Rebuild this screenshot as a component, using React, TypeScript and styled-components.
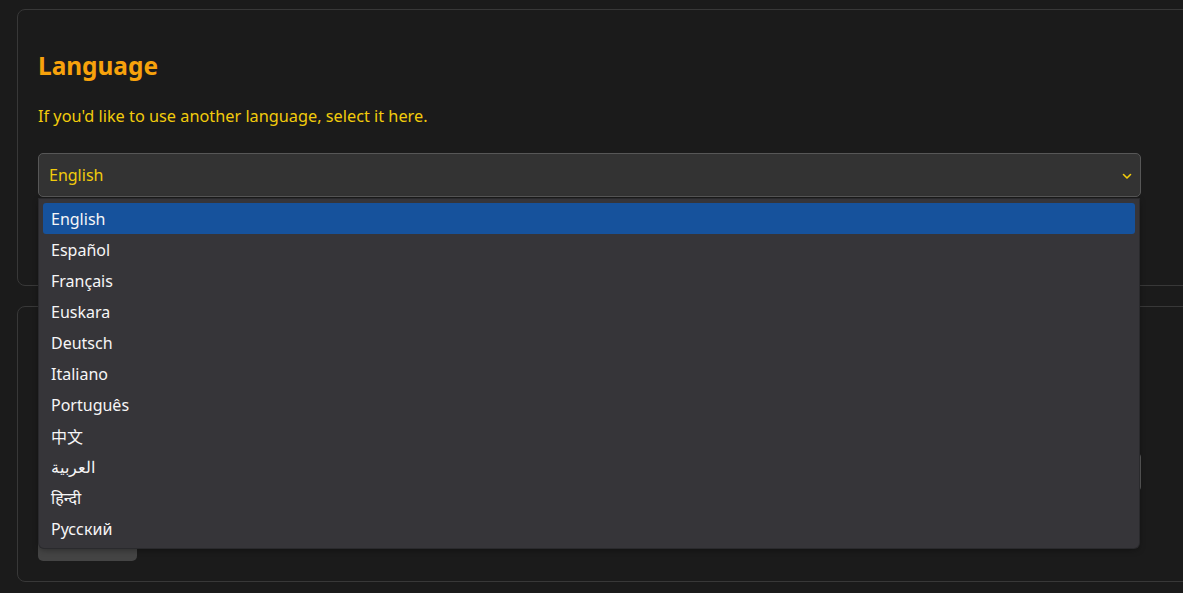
import React from "react";
import styled, { createGlobalStyle } from "styled-components";

const GlobalStyle = createGlobalStyle`
  html, body {
    margin: 0;
    padding: 0;
    background: #1b1b1b;
    overflow: hidden;
  }
  body {
    font-family: "Noto Sans", "Noto Sans CJK SC", sans-serif;
  }
`;

const Page = styled.div`
  display: flex;
  flex-direction: column;
  gap: 20px;
  padding: 9px 0 0 17px;
  width: 1200px;
`;

const Card = styled.section`
  position: relative;
  border: 1px solid #383838;
  border-radius: 8px;
  background: #1b1b1b;
  padding: 0 20px 20px 20px;
  display: flex;
  flex-direction: column;
`;

const Title = styled.h2`
  margin: 41px 0 0 0;
  font-size: 24.4px;
  line-height: 29px;
  font-weight: 700;
  color: #f7a20c;
`;

const Hint = styled.p`
  margin: 25px 0 0 0;
  font-size: 16.3px;
  line-height: 22px;
  color: #f2cb0c;
`;

const SelectWrap = styled.div`
  position: relative;
  margin-top: 26px;
  width: 1103px;
`;

const SelectBox = styled.div`
  box-sizing: border-box;
  height: 44px;
  display: flex;
  align-items: center;
  justify-content: space-between;
  padding: 0 8px 0 10px;
  background: #333333;
  border: 1px solid #575757;
  border-radius: 5px;
  color: #f2cb0c;
  font-size: 16px;
`;

const Chevron = styled.svg`
  width: 10px;
  height: 10px;
  margin-top: 1px;
`;

const Menu = styled.ul`
  position: absolute;
  top: 46px;
  left: 1px;
  width: 1100px;
  box-sizing: border-box;
  margin: 0;
  padding: 4px;
  list-style: none;
  background: #363539;
  border-radius: 0 0 5px 5px;
  box-shadow: 0 0 0 1px #2a2a2d, 0 2px 6px rgba(0, 0, 0, 0.35);
  z-index: 10;
`;

const Option = styled.li<{ $active?: boolean }>`
  height: 31px;
  display: flex;
  align-items: center;
  padding: 0 8px;
  border-radius: 3px;
  font-size: 16px;
  color: #f6f6f7;
  background: ${(p) => (p.$active ? "#16529c" : "transparent")};
`;

const Spacer = styled.div<{ $h: number }>`
  height: ${(p) => p.$h}px;
`;

const TextInput = styled.div`
  box-sizing: border-box;
  margin-top: 28px;
  width: 1103px;
  height: 40px;
  border: 1px solid #5a5a5a;
  border-radius: 5px;
  background: #1b1b1b;
`;

const Button = styled.button`
  margin-top: 31px;
  width: 99px;
  height: 38px;
  border: none;
  border-radius: 5px;
  background: #444444;
  color: #e6e6e6;
  font-family: inherit;
  font-size: 14px;
  line-height: 18px;
  padding: 0 0 4px 0;
`;

const languages = [
  "English",
  "Español",
  "Français",
  "Euskara",
  "Deutsch",
  "Italiano",
  "Português",
  "中文",
  "العربية",
  "हिन्दी",
  "Русский",
];

export default function App() {
  return (
    <>
      <GlobalStyle />
      <Page>
        <Card>
          <Title>Language</Title>
          <Hint>If you'd like to use another language, select it here.</Hint>
          <SelectWrap>
            <SelectBox>
              <span>English</span>
              <Chevron viewBox="0 0 10 10" fill="none">
                <path d="M1.5 3.5 L5 7 L8.5 3.5" stroke="#f2cb0c" strokeWidth="1.6" strokeLinecap="round" strokeLinejoin="round" />
              </Chevron>
            </SelectBox>
            <Menu>
              {languages.map((l, i) => (
                <Option key={l} $active={i === 0}>
                  {l}
                </Option>
              ))}
            </Menu>
          </SelectWrap>
          <Spacer $h={68} />
        </Card>
        <Card>
          <Title>Username</Title>
          <Hint>Change the name shown to other people.</Hint>
          <TextInput />
          <Button>Save</Button>
        </Card>
      </Page>
    </>
  );
}
